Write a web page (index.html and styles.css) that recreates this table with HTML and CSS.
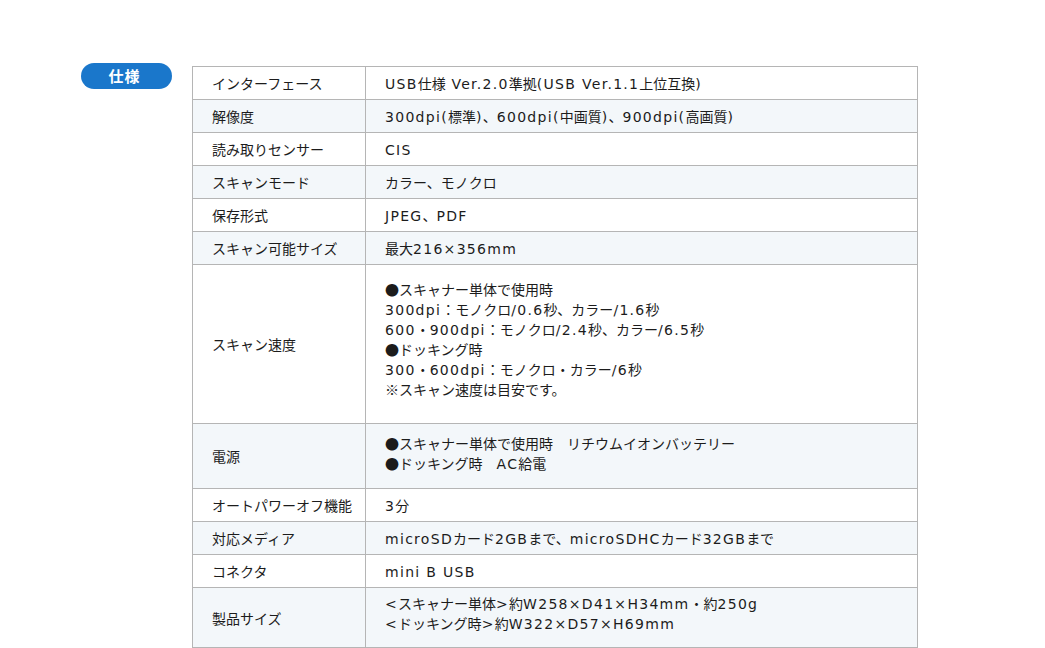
FILE: index.html
```html
<!DOCTYPE html>
<html lang="ja">
<head>
<meta charset="utf-8">
<title>仕様</title>
<link rel="stylesheet" href="styles.css">
</head>
<body>
<div class="page">
  <div class="badge">仕様</div>
  <table class="spec">
    <colgroup><col class="c1"><col class="c2"></colgroup>
    <tbody>
      <tr><th>インターフェース</th><td><span class="en">USB</span>仕様<span class="en"> Ver.2.0</span>準拠<span class="en">(USB Ver.1.1</span>上位互換<span class="en">)</span></td></tr>
      <tr class="alt"><th>解像度</th><td><span class="en">300dpi(</span>標準<span class="en">)</span>、<span class="en">600dpi(</span>中画質<span class="en">)</span>、<span class="en">900dpi(</span>高画質<span class="en">)</span></td></tr>
      <tr><th>読み取りセンサー</th><td><span class="en">CIS</span></td></tr>
      <tr class="alt"><th>スキャンモード</th><td>カラー、モノクロ</td></tr>
      <tr><th>保存形式</th><td><span class="en">JPEG</span>、<span class="en">PDF</span></td></tr>
      <tr class="alt"><th>スキャン可能サイズ</th><td>最大<span class="en">216×356mm</span></td></tr>
      <tr class="speed"><th>スキャン速度</th><td>●スキャナー単体で使用時<br><span class="en">300dpi</span>：モノクロ<span class="en">/0.6</span>秒、カラー<span class="en">/1.6</span>秒<br><span class="en">600</span>・<span class="en">900dpi</span>：モノクロ<span class="en">/2.4</span>秒、カラー<span class="en">/6.5</span>秒<br>●ドッキング時<br><span class="en">300</span>・<span class="en">600dpi</span>：モノクロ・カラー<span class="en">/6</span>秒<br>※スキャン速度は目安です。</td></tr>
      <tr class="alt power"><th>電源</th><td>●スキャナー単体で使用時　リチウムイオンバッテリー<br>●ドッキング時　<span class="en">AC</span>給電</td></tr>
      <tr><th>オートパワーオフ機能</th><td><span class="en">3</span>分</td></tr>
      <tr class="alt"><th>対応メディア</th><td><span class="en">microSD</span>カード<span class="en">2GB</span>まで、<span class="en">microSDHC</span>カード<span class="en">32GB</span>まで</td></tr>
      <tr><th>コネクタ</th><td><span class="en">mini B USB</span></td></tr>
      <tr class="alt size"><th>製品サイズ</th><td><span class="en">&lt;</span>スキャナー単体<span class="en">&gt;</span>約<span class="en">W258×D41×H34mm</span>・約<span class="en">250g</span><br><span class="en">&lt;</span>ドッキング時<span class="en">&gt;</span>約<span class="en">W322×D57×H69mm</span></td></tr>
    </tbody>
  </table>
</div>
</body>
</html>
```

FILE: styles.css
```css
html, body {
  margin: 0;
  padding: 0;
  background: #ffffff;
}

body {
  font-family: "Noto Sans CJK JP", "Noto Sans", sans-serif;
  color: #1c1c1c;
}

.page {
  display: flex;
  align-items: flex-start;
  gap: 20px;
  padding: 63px 0 0 81px;
}

.badge {
  flex: none;
  width: 91px;
  height: 26px;
  border-radius: 13px;
  background: #1a77cb;
  color: #ffffff;
  font-size: 15px;
  font-weight: 700;
  line-height: 26px;
  text-align: center;
  letter-spacing: 1px;
  padding-right: 4px;
  box-sizing: border-box;
}

.spec {
  margin-top: 3px;
  width: 725px;
  table-layout: fixed;
  border-collapse: collapse;
  font-size: 14px;
  line-height: 20px;
}

.spec .c1 { width: 173px; }
.spec .c2 { width: 552px; }

.spec th,
.spec td {
  border: 1px solid #b5b5b5;
  padding: 6px 19px;
  text-align: left;
  font-weight: 400;
  vertical-align: middle;
  white-space: nowrap;
}

.spec tr.alt th,
.spec tr.alt td {
  background: #f3f7fa;
}

.spec tr.speed td {
  padding-top: 14px;
  padding-bottom: 24px;
}

.spec tr.power td {
  padding-top: 9px;
  padding-bottom: 15px;
}

.spec tr.size td {
  padding-top: 5px;
  padding-bottom: 14px;
}

.en {
  font-family: "DejaVu Sans", "Noto Sans", sans-serif;
  letter-spacing: 1.3px;
  line-height: 1;
}
```
